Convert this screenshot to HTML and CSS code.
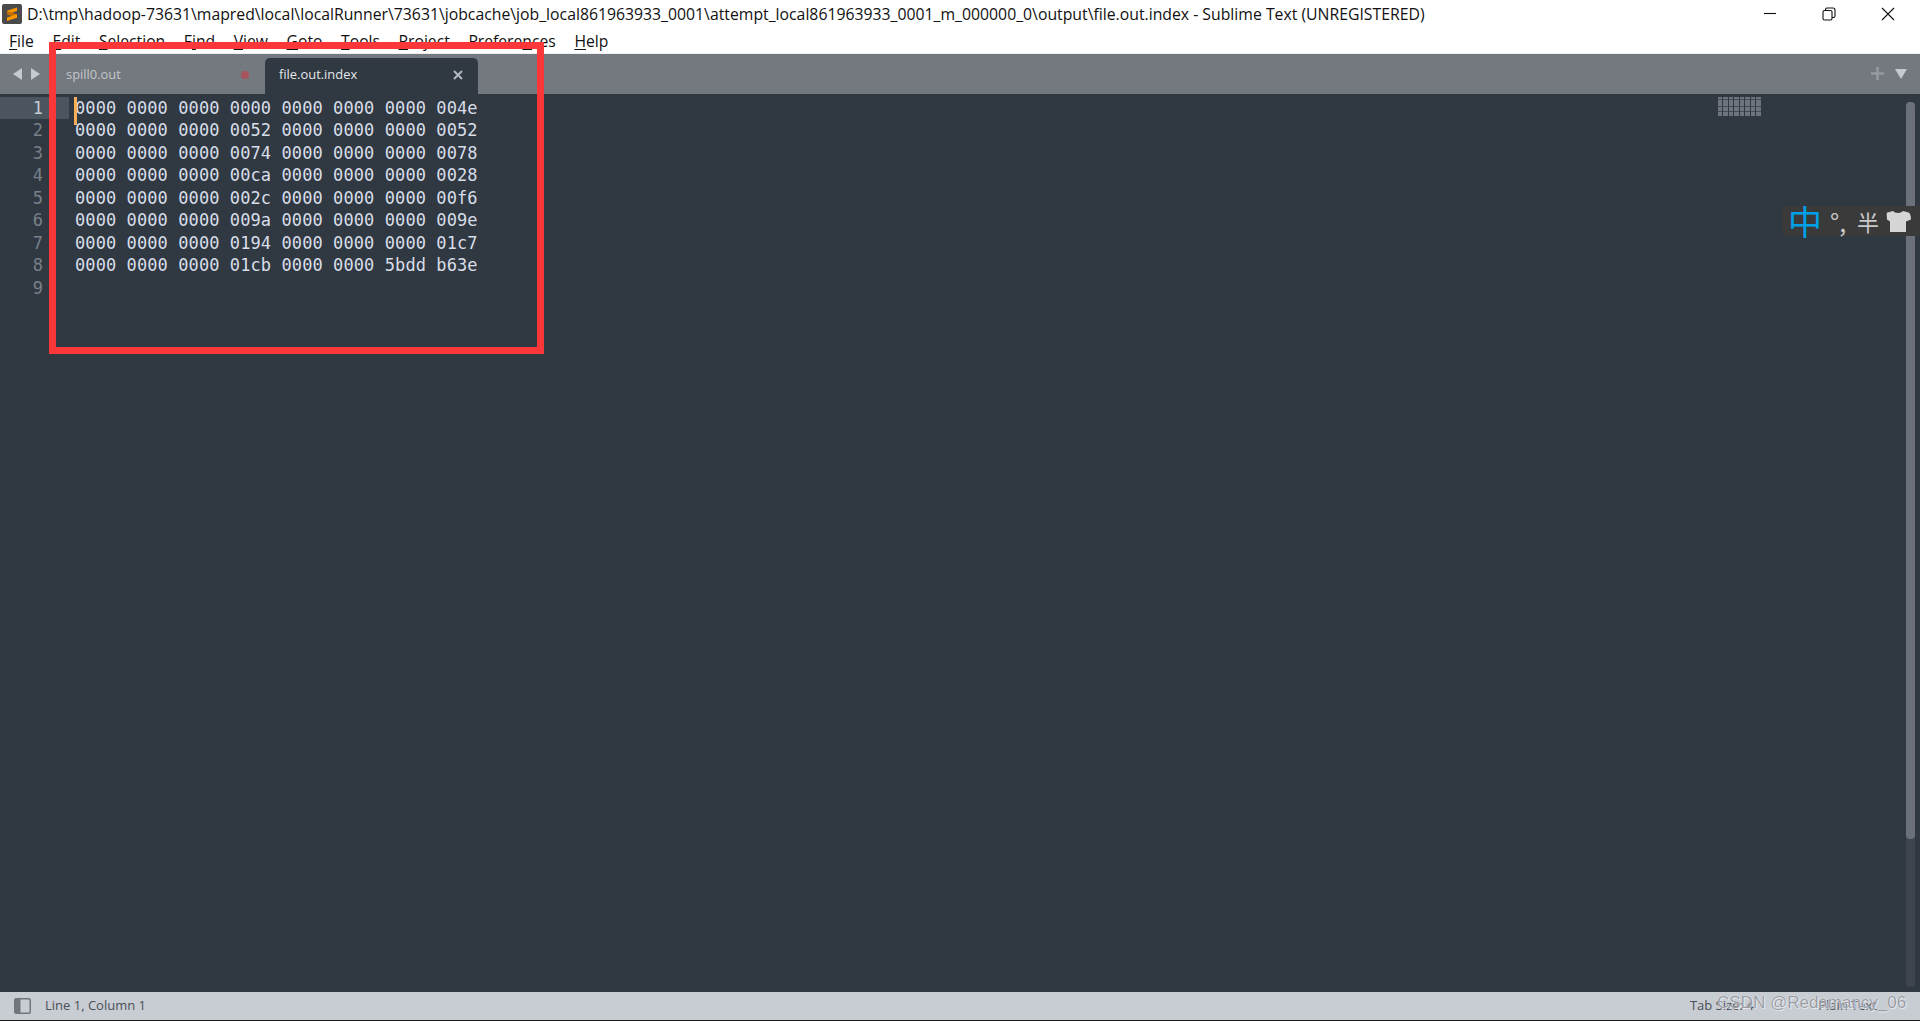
FILE: index.html
```html
<!DOCTYPE html>
<html lang="en">
<head>
<meta charset="utf-8">
<title>file.out.index - Sublime Text (UNREGISTERED)</title>
<link rel="stylesheet" href="styles.css">
</head>
<body>
<div class="window">
  <header class="titlebar">
    <svg class="logo" viewBox="0 0 20 20" aria-hidden="true">
      <rect width="20" height="20" rx="2" fill="#4a4a4a"/>
      <path d="M15 3.500v3.600L5 10.400V6.800z" fill="#ff9800"/>
      <path d="M5 7l10 3.300v3.400L5 10.400z" fill="#c46f00"/>
      <path d="M15 10.200v3.600L5 17v-3.600z" fill="#ff9800"/>
    </svg>
    <div class="title">D:\tmp\hadoop-73631\mapred\local\localRunner\73631\jobcache\job_local861963933_0001\attempt_local861963933_0001_m_000000_0\output\file.out.index - Sublime Text (UNREGISTERED)</div>
    <div class="winctl">
      <svg viewBox="0 0 14 14"><path d="M1 6.500h12" /></svg>
      <svg viewBox="0 0 14 14"><rect x="1" y="3.500" width="9" height="9.500" rx="1.500"/><path d="M3.500 3.500V2.500A1.500 1.500 0 0 1 5 1h6a2 2 0 0 1 2 2v6a1.500 1.500 0 0 1-1.500 1.500H10"/></svg>
      <svg viewBox="0 0 14 14"><path d="M1 1l12 12M13 1L1 13"/></svg>
    </div>
  </header>
  <nav class="menubar">
    <span><u>F</u>ile</span><span><u>E</u>dit</span><span><u>S</u>election</span><span>F<u>i</u>nd</span><span><u>V</u>iew</span><span><u>G</u>oto</span><span><u>T</u>ools</span><span><u>P</u>roject</span><span>Prefere<u>n</u>ces</span><span><u>H</u>elp</span>
  </nav>
  <div class="tabbar">
    <div class="nav-arrows">
      <svg viewBox="0 0 10 12"><path d="M9 0v12L0 6z"/></svg>
      <svg viewBox="0 0 10 12"><path d="M1 0v12l9-6z"/></svg>
    </div>
    <div class="tab">
      <span class="tab-name">spill0.out</span>
      <span class="dirty"></span>
    </div>
    <div class="tab tab-active">
      <span class="tab-name">file.out.index</span>
      <svg class="tab-close" viewBox="0 0 10 10"><path d="M1 1l8 8M9 1L1 9"/></svg>
    </div>
    <div class="tab-tools">
      <svg class="plus" viewBox="0 0 13 13"><path d="M6.500 0v13M0 6.500h13"/></svg>
      <svg class="more" viewBox="0 0 12 10"><path d="M0 0h12L6 10z"/></svg>
    </div>
  </div>
  <main class="editor">
    <div class="gutter">
      <div class="ln ln-active">1</div>
      <div class="ln">2</div>
      <div class="ln">3</div>
      <div class="ln">4</div>
      <div class="ln">5</div>
      <div class="ln">6</div>
      <div class="ln">7</div>
      <div class="ln">8</div>
      <div class="ln">9</div>
    </div>
    <div class="code">
      <div class="caret"></div>
      <div class="line">0000 0000 0000 0000 0000 0000 0000 004e</div>
      <div class="line">0000 0000 0000 0052 0000 0000 0000 0052</div>
      <div class="line">0000 0000 0000 0074 0000 0000 0000 0078</div>
      <div class="line">0000 0000 0000 00ca 0000 0000 0000 0028</div>
      <div class="line">0000 0000 0000 002c 0000 0000 0000 00f6</div>
      <div class="line">0000 0000 0000 009a 0000 0000 0000 009e</div>
      <div class="line">0000 0000 0000 0194 0000 0000 0000 01c7</div>
      <div class="line">0000 0000 0000 01cb 0000 0000 5bdd b63e</div>
    </div>
    <div class="minimap"></div>
    <div class="scrolltrack"><div class="scrollthumb"></div></div>
    <div class="ime">
      <span class="ime-zh">中</span>
      <span class="ime-mark">°,</span>
      <span class="ime-half">半</span>
      <svg class="ime-shirt" viewBox="0 0 26 22"><path d="M8 1c2 2.500 8 2.500 10 0l5.500 1.500c1.500.5 2.500 3 2.500 7L21 11.500V22H5V11.500L2 9.500C2 5.500 1 3 2.500 2.500z"/></svg>
    </div>
  </main>
  <footer class="statusbar">
    <svg class="panel-icon" viewBox="0 0 17 16"><rect x=".75" y=".75" width="15.500" height="14.500" rx="1.500"/><path class="panel-fill" d="M1 1h5.500v14H1z"/></svg>
    <span class="status-pos">Line 1, Column 1</span>
    <span class="status-tab">Tab Size: 4</span>
    <span class="status-syntax">Plain Text</span>
  </footer>
  <div class="highlight"></div>
  <div class="watermark">CSDN @Redamancy_06</div>
</div>
</body>
</html>
```
FILE: styles.css
```css
* { box-sizing: border-box; }
html, body { margin: 0; height: 100%; overflow: hidden; }
body { background: #fff; font-family: "Open Sans", "Noto Sans", sans-serif; }
.window { position: relative; display: flex; flex-direction: column; width: 1920px; height: 1021px; }

.titlebar { display: flex; align-items: center; height: 27px; flex: none; background: #fff; padding-left: 2px; }
.logo { width: 20px; height: 20px; flex: none; margin-right: 5px; }
.title { font-size: 15.790px; color: #111; white-space: nowrap; flex: 1; }
.winctl { display: flex; gap: 45px; padding-right: 25px; flex: none; align-self: flex-start; padding-top: 7px; }
.winctl svg { width: 14px; height: 14px; fill: none; stroke: #111; stroke-width: 1.1; }

.menubar { display: flex; gap: 18.600px; height: 26px; flex: none; align-items: center; padding: 1px 0 0 9px; font-size: 15.700px; color: #111; background: #fff; }
.menubar u { text-underline-offset: 2px; }

.tabbar { position: relative; display: flex; align-items: flex-end; height: 41px; flex: none; background: #74787f; border-top: 1px solid #eee; }
.nav-arrows { display: flex; gap: 7px; width: 66px; padding: 0 0 14px 13px; flex: none; align-self: flex-end; }
.nav-arrows svg { width: 10px; height: 12px; fill: #c6c9cd; }
.tab { display: flex; align-items: center; height: 36px; width: 199px; padding: 0 16px 4px 0; flex: none; font-size: 12.900px; color: #c3c7cc; }
.tab-name { flex: 1; }
.dirty { width: 8px; height: 8px; border-radius: 50%; background: #a8525c; margin-top: 2px; }
.tab-active { width: 213px; padding: 0 15px 4px 14px; background: #303841; color: #e6e9ec; border-radius: 5px 5px 0 0; }
.tab-close { width: 10px; height: 10px; margin-top: 2px; fill: none; stroke: #b3b7bc; stroke-width: 2; }
.tab-tools { margin-left: auto; display: flex; align-items: center; gap: 11px; padding: 0 13px 14px 0; }
.plus { width: 13px; height: 13px; fill: none; stroke: #969aa0; stroke-width: 2.500; }
.more { width: 12px; height: 10px; fill: #c6c9cd; }

.editor { position: relative; flex: 1; display: flex; background: #303841; padding-top: 3px; font-family: "DejaVu Sans Mono", monospace; font-size: 17px; line-height: 22.430px; letter-spacing: .09px; }
.gutter { width: 69px; flex: none; color: #78808a; text-align: right; }
.ln { padding-right: 26px; }
.ln-active { background: #4a5560; color: #c5ccd4; }
.code { position: relative; padding-left: 6px; color: #d8dee9; }
.line { height: 22.430px; white-space: pre; }
.caret { position: absolute; left: 5px; top: 0; width: 3px; height: 28px; background: #f9ae58; }

.minimap { position: absolute; left: 1718px; top: 3px; width: 44px; height: 19px;
  background:
    repeating-linear-gradient(90deg, transparent 0 4.500px, #303841 4.500px 5.500px),
    repeating-linear-gradient(0deg, #6e747c 0 2px, #454c55 2px 2.400px); }
.scrolltrack { position: absolute; left: 1906px; top: 8px; width: 9px; height: 885px; background: #3e454f; border-radius: 4px; }
.scrollthumb { height: 737px; background: #6c7179; border-radius: 4px; }

.ime { position: absolute; right: 0; top: 112px; width: 138px; height: 30px; display: flex; align-items: center; background: #3a3a3b; border-radius: 4px 0 0 4px; font-family: "Noto Sans CJK SC", sans-serif; letter-spacing: 0; line-height: 30px; color: #c9c9c9; padding-left: 6px; }
.ime-zh { color: #00a0e9; font-size: 34px; font-weight: 400; width: 36px; }
.ime-mark { font-size: 25px; margin-left: 6px; width: 27px; }
.ime-half { font-size: 22px; width: 28px; }
.ime-shirt { width: 26px; height: 22px; fill: #d6d6d6; }

.statusbar { position: relative; display: flex; align-items: center; height: 29px; flex: none; background: #c8ccd3; border-bottom: 1px solid #1b1b1b; font-size: 13px; color: #4b5058; padding: 0 0 2px 14px; }
.panel-icon { width: 17px; height: 16px; flex: none; margin: 2px 14px 0 0; fill: none; stroke: #72767c; stroke-width: 1.500; }
.panel-fill { fill: #72767c; stroke: none; }
.status-pos { flex: 1; }
.status-tab { margin-right: 64.500px; }
.status-syntax { margin-right: 43px; }

.highlight { position: absolute; left: 49px; top: 42px; width: 495px; height: 312px; border: 7px solid #fb3739; }
.watermark { position: absolute; left: 1717px; top: 993px; font-family: "Liberation Sans", sans-serif; font-size: 17px; color: rgba(120,125,135,.75); text-shadow: 0 0 1px #fff, 1px 1px 1px rgba(255,255,255,.6); white-space: nowrap; }
```
